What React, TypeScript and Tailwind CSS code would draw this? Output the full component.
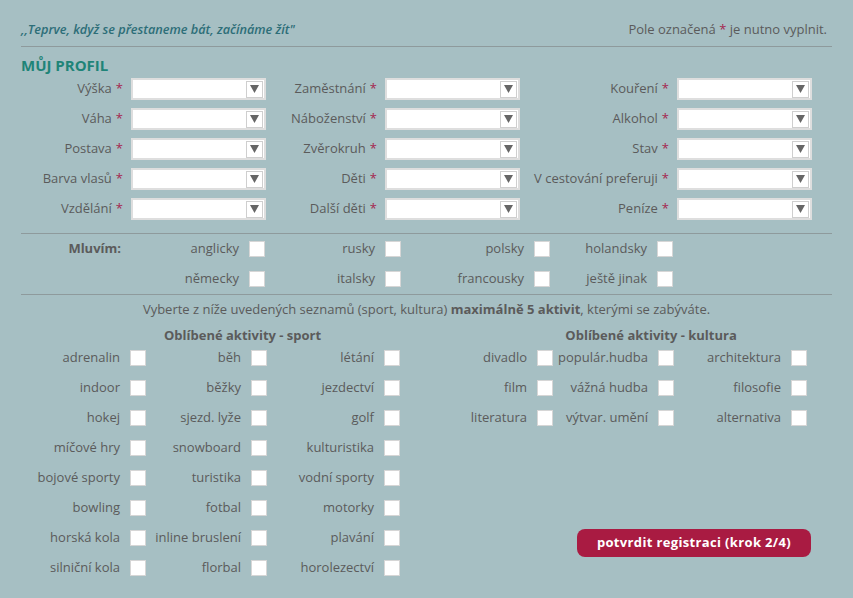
import React from "react";

const selectRows: [string, string, string][] = [
  ["Výška", "Zaměstnání", "Kouření"],
  ["Váha", "Náboženství", "Alkohol"],
  ["Postava", "Zvěrokruh", "Stav"],
  ["Barva vlasů", "Děti", "V cestování preferuji"],
  ["Vzdělání", "Další děti", "Peníze"],
];

const sportRows: [string, string, string][] = [
  ["adrenalin", "běh", "létání"],
  ["indoor", "běžky", "jezdectví"],
  ["hokej", "sjezd. lyže", "golf"],
  ["míčové hry", "snowboard", "kulturistika"],
  ["bojové sporty", "turistika", "vodní sporty"],
  ["bowling", "fotbal", "motorky"],
  ["horská kola", "inline bruslení", "plavání"],
  ["silniční kola", "florbal", "horolezectví"],
];

const cultureRows: [string, string, string][] = [
  ["divadlo", "populár.hudba", "architektura"],
  ["film", "vážná hudba", "filosofie"],
  ["literatura", "výtvar. umění", "alternativa"],
];

function Star() {
  return <span className="text-[#a5264f] ml-1">*</span>;
}

function Select() {
  return (
    <div className="w-[135px] h-[22px] bg-white border-2 border-[#dedede] flex items-center justify-end pr-[1px]">
      <div className="w-[17px] h-[17px] border border-[#cfcfcf] bg-white flex items-center justify-center">
        <svg width="9" height="8" viewBox="0 0 9 8">
          <path d="M0 0 H9 L4.5 8 Z" fill="#666" />
        </svg>
      </div>
    </div>
  );
}

function Box() {
  return <span className="block w-[16px] h-[16px] bg-white border border-[#d6d6d6] shrink-0" />;
}

function Check({ label, w }: { label: string; w: string }) {
  return (
    <div className={`${w} h-[30px] flex items-center justify-end gap-[10px]`}>
      <span>{label}</span>
      <Box />
    </div>
  );
}

export default function App() {
  return (
    <div
      className="w-[853px] h-[598px] bg-[#a6bfc3] text-[13px] text-[#5b5b5b] overflow-hidden"
      style={{ fontFamily: '"Open Sans", "Noto Sans", sans-serif' }}
    >
      <div className="ml-[21px] w-[811px]">
        {/* hlavička */}
        <div className="h-[47px] flex items-end justify-between pb-[7px] border-b border-[#8e9a9c]">
          <span className="italic font-semibold text-[12.7px] text-[#2d6e78]">
            ,,Teprve, když se přestaneme bát, začínáme žít"
          </span>
          <span className="mr-[5px]">
            Pole označená <span className="text-[#a5264f]">*</span> je nutno vyplnit.
          </span>
        </div>

        <h2 className="mt-[9px] h-[18px] leading-[18px] text-[15px] font-bold text-[#1f8478]">MŮJ PROFIL</h2>

        {/* výběry */}
        <div className="grid grid-cols-[110px_135px_119px_135px_157px_135px]">
          {selectRows.map((row) =>
            row.map((label) => (
              <React.Fragment key={label}>
                <div className="h-[30px] flex items-center justify-end pr-2">
                  {label}
                  <Star />
                </div>
                <div className="h-[30px] flex items-center">
                  <Select />
                </div>
              </React.Fragment>
            ))
          )}
        </div>

        {/* jazyky */}
        <div className="mt-[9px] border-t border-[#8e9a9c]">
          <div className="flex">
            <div className="w-[110px] h-[30px] flex items-center justify-end pr-[10px] font-bold">Mluvím:</div>
            <Check label="anglicky" w="w-[134px]" />
            <Check label="rusky" w="w-[136px]" />
            <Check label="polsky" w="w-[149px]" />
            <Check label="holandsky" w="w-[123px]" />
          </div>
          <div className="flex">
            <div className="w-[110px]" />
            <Check label="německy" w="w-[134px]" />
            <Check label="italsky" w="w-[136px]" />
            <Check label="francousky" w="w-[149px]" />
            <Check label="ještě jinak" w="w-[123px]" />
          </div>
        </div>

        {/* aktivity */}
        <div className="border-t border-[#8e9a9c]">
          <p className="h-[30px] flex items-center justify-center">
            Vyberte z níže uvedených seznamů (sport, kultura)&nbsp;
            <b className="font-bold">maximálně 5 aktivit</b>, kterými se zabýváte.
          </p>
          <div className="flex h-[18px] leading-[18px] font-bold mt-[1px] -mb-[1px]">
            <div className="w-[458px] text-center">Oblíbené aktivity - sport</div>
            <div className="w-[374px] ml-[6px] text-center">Oblíbené aktivity - kultura</div>
          </div>
          <div className="flex">
            <div className="w-[379px] grid grid-cols-[125px_121px_133px]">
              {sportRows.map((row) =>
                row.map((label, i) => (
                  <Check key={label} label={label} w={i === 0 ? "w-[125px]" : i === 1 ? "w-[121px]" : "w-[133px]"} />
                ))
              )}
            </div>
            <div className="flex-1 flex flex-col">
              <div className="grid grid-cols-[153px_121px_133px]">
                {cultureRows.map((row) =>
                  row.map((label, i) => (
                    <Check key={label} label={label} w={i === 0 ? "w-[153px]" : i === 1 ? "w-[121px]" : "w-[133px]"} />
                  ))
                )}
              </div>
              <button className="mt-[96px] ml-[177px] w-[234px] h-[28px] rounded-lg bg-[#a91b42] text-white font-bold text-[13px] tracking-[0.35px]">
                potvrdit registraci (krok 2/4)
              </button>
            </div>
          </div>
        </div>
      </div>
    </div>
  );
}
